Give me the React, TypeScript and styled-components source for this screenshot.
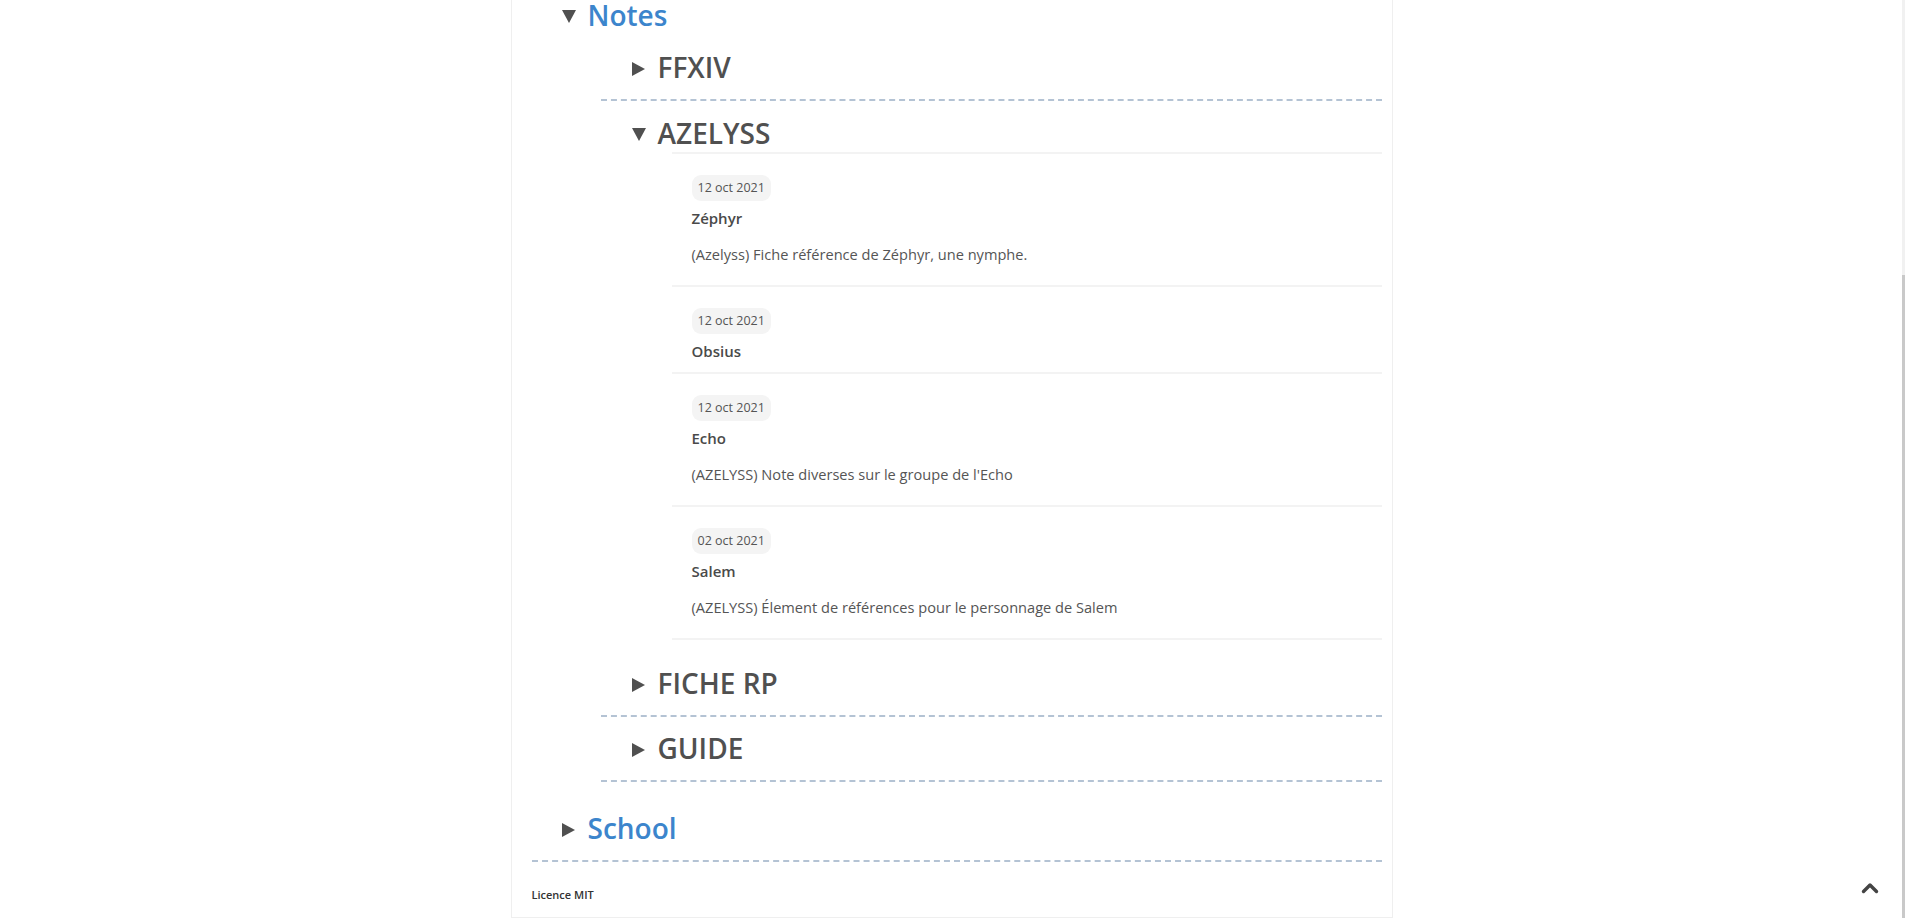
import React from "react";
import styled, { createGlobalStyle } from "styled-components";

const GlobalStyle = createGlobalStyle`
  html, body {
    margin: 0;
    padding: 0;
    height: 100%;
    overflow: hidden;
    background: #ffffff;
  }
  body {
    font-family: "Open Sans", "Noto Sans", "DejaVu Sans", sans-serif;
    color: #555555;
  }
  * { box-sizing: border-box; }
`;

const Page = styled.div`
  display: flex;
  height: 100vh;
`;

const Main = styled.main`
  flex: 1;
  padding-left: 1px;
  overflow: hidden;
`;

const Card = styled.div`
  width: 882px;
  margin: -16px auto 0;
  background: #ffffff;
  border: 1px solid #efefef;
  border-top: none;
  padding: 0 10px 0 20px;
`;

const Section = styled.section<{ $open: boolean; $level: 1 | 2 }>`
  padding-top: ${(p) => (p.$open && p.$level === 2 ? "14px" : "13px")};
  padding-bottom: ${(p) => (p.$open ? (p.$level === 1 ? "15px" : "12px") : "14px")};
  border-bottom: ${(p) => (p.$open ? "none" : "2px dashed #b4c3d4")};
`;

const Summary = styled.div<{ $level: 1 | 2; $open: boolean }>`
  display: flex;
  align-items: center;
  padding-left: ${(p) => (p.$level === 1 ? "30px" : "31px")};
  margin-bottom: ${(p) => (p.$open ? (p.$level === 1 ? "3px" : "1px") : "0")};
  font-size: 28px;
  line-height: 36px;
  font-weight: 600;
  color: ${(p) => (p.$level === 1 ? "#3c85cc" : "#505050")};
  cursor: pointer;
`;

const Marker = styled.span`
  display: flex;
  width: 26px;
  flex-shrink: 0;
  margin-top: 3px;
  color: #505050;
`;

const SubList = styled.div`
  margin-left: 69px;
`;

const EntryList = styled.ul`
  list-style: none;
  margin: 0 0 0 71px;
  padding: 0;
  border-top: 2px solid #f3f3f3;
`;

const Entry = styled.li`
  padding: 21px 0 11px 20px;
  border-bottom: 2px solid #f3f3f3;
`;

const DateBadge = styled.span`
  display: block;
  width: fit-content;
  height: 26px;
  line-height: 26px;
  padding: 0 6px;
  border-radius: 9px;
  background: #f4f4f4;
  font-size: 12.5px;
  color: #555555;
`;

const EntryTitle = styled.h4`
  margin: 7px 0 0;
  font-size: 15px;
  line-height: 20px;
  font-weight: 600;
  color: #4a4a4a;
`;

const EntryDesc = styled.p`
  margin: 16px 0 10px;
  font-size: 14.6px;
  line-height: 20px;
  color: #555555;
`;

const Footer = styled.footer`
  padding: 25px 0 14px;
  font-size: 11px;
  line-height: 16px;
  font-weight: 600;
  color: #333333;
`;

const ScrollTrack = styled.div`
  width: 3px;
  flex-shrink: 0;
  display: flex;
  flex-direction: column;
  padding-top: 275px;
  background: #f1f1f1;
`;

const ScrollThumb = styled.div`
  flex: 1;
  background: #c9c9c9;
`;

const BackToTop = styled.button`
  position: fixed;
  right: 26px;
  bottom: 24px;
  width: 18px;
  height: 13px;
  padding: 0;
  border: 0;
  background: none;
  display: flex;
  cursor: pointer;
`;

const Triangle = ({ open }: { open: boolean }) =>
  open ? (
    <svg width="14" height="13" viewBox="0 0 14 13">
      <polygon points="0,0 14,0 7,13" fill="currentColor" />
    </svg>
  ) : (
    <svg width="13" height="14" viewBox="0 0 13 14">
      <polygon points="0,0 13,7 0,14" fill="currentColor" />
    </svg>
  );

type Note = { date: string; title: string; desc?: string };

const azelyss: Note[] = [
  { date: "12 oct 2021", title: "Zéphyr", desc: "(Azelyss) Fiche référence de Zéphyr, une nymphe." },
  { date: "12 oct 2021", title: "Obsius" },
  { date: "12 oct 2021", title: "Echo", desc: "(AZELYSS) Note diverses sur le groupe de l'Echo" },
  { date: "02 oct 2021", title: "Salem", desc: "(AZELYSS) Élement de références pour le personnage de Salem" },
];

const SubSection = ({ title, open, notes }: { title: string; open?: boolean; notes?: Note[] }) => (
  <Section $open={!!open} $level={2}>
    <Summary $level={2} $open={!!open}>
      <Marker>
        <Triangle open={!!open} />
      </Marker>
      {title}
    </Summary>
    {open && notes && (
      <EntryList>
        {notes.map((n) => (
          <Entry key={n.title}>
            <DateBadge>{n.date}</DateBadge>
            <EntryTitle>{n.title}</EntryTitle>
            {n.desc && <EntryDesc>{n.desc}</EntryDesc>}
          </Entry>
        ))}
      </EntryList>
    )}
  </Section>
);

export default function App() {
  return (
    <>
      <GlobalStyle />
      <Page>
        <Main>
          <Card>
            <Section $open={true} $level={1}>
              <Summary $level={1} $open={true}>
                <Marker>
                  <Triangle open />
                </Marker>
                Notes
              </Summary>
              <SubList>
                <SubSection title="FFXIV" />
                <SubSection title="AZELYSS" open notes={azelyss} />
                <SubSection title="FICHE RP" />
                <SubSection title="GUIDE" />
              </SubList>
            </Section>
            <Section $open={false} $level={1}>
              <Summary $level={1} $open={false}>
                <Marker>
                  <Triangle open={false} />
                </Marker>
                School
              </Summary>
            </Section>
            <Footer>Licence MIT</Footer>
          </Card>
        </Main>
        <ScrollTrack>
          <ScrollThumb />
        </ScrollTrack>
      </Page>
      <BackToTop aria-label="Retour en haut">
        <svg width="18" height="13" viewBox="0 0 18 13">
          <polyline
            points="2.5,10.5 9,4 15.5,10.5"
            fill="none"
            stroke="#444444"
            strokeWidth="3.4"
            strokeLinecap="round"
            strokeLinejoin="round"
          />
        </svg>
      </BackToTop>
    </>
  );
}
